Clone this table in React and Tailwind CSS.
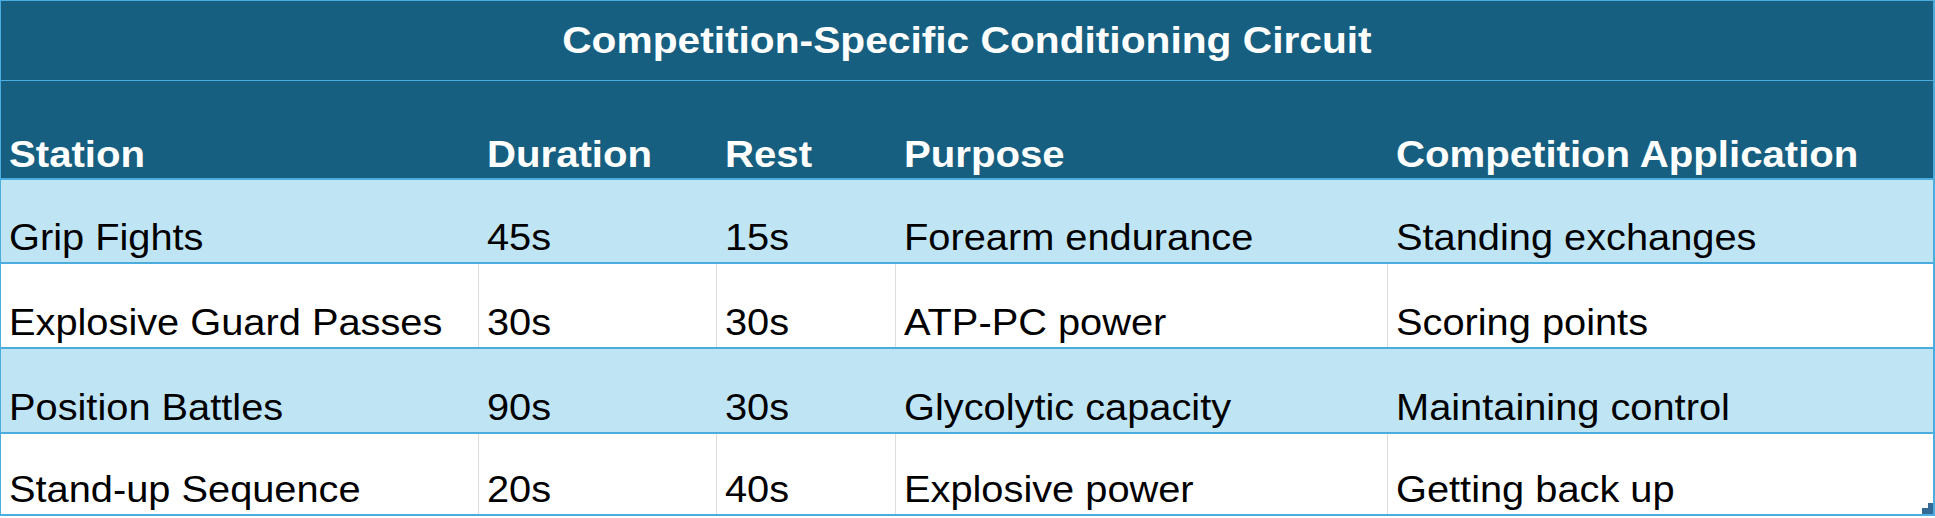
import React from "react";

const rows = [
  ["Grip Fights", "45s", "15s", "Forearm endurance", "Standing exchanges"],
  ["Explosive Guard Passes", "30s", "30s", "ATP-PC power", "Scoring points"],
  ["Position Battles", "90s", "30s", "Glycolytic capacity", "Maintaining control"],
  ["Stand-up Sequence", "20s", "40s", "Explosive power", "Getting back up"],
];

const heights = ["h-[84px]", "h-[85px]", "h-[85px]", "h-[82px]"];

export default function App() {
  return (
    <div className="w-[1935px] h-[518px] bg-white font-['Liberation_Sans',Arial,sans-serif]">
      <div className="relative w-[1935px] border-t border-l border-r-2 border-[#4badde]">
        <div className="h-[80px] bg-[#175f80] border-b border-[#4badde] flex items-center justify-center text-white font-bold text-[37px] leading-none">
          <span className="inline-block origin-center scale-x-[1.1] whitespace-nowrap">
            Competition-Specific Conditioning Circuit
          </span>
        </div>
        <div className="grid grid-cols-[478px_238px_179px_492px_1fr] h-[99px] bg-[#175f80] border-b-2 border-[#4badde]">
          {["Station", "Duration", "Rest", "Purpose", "Competition Application"].map((h) => (
            <div key={h} className="flex items-end pl-[8px] pb-[5px] text-white font-bold text-[37px] leading-none">
              <span className="inline-block origin-left scale-x-[1.085] whitespace-nowrap">{h}</span>
            </div>
          ))}
        </div>
        {rows.map((r, i) => {
          const blue = i % 2 === 0;
          return (
            <div
              key={i}
              className={`grid grid-cols-[478px_238px_179px_492px_1fr] ${heights[i]} border-b-2 border-[#4badde] ${blue ? "bg-[#bfe5f5]" : "bg-white"}`}
            >
              {r.map((c, j) => (
                <div
                  key={j}
                  className={`flex items-end pl-[8px] pb-[6px] text-black text-[37px] leading-none ${!blue && j < 4 ? "border-r border-[#dddddd]" : ""}`}
                >
                  <span className="inline-block origin-left scale-x-[1.075] whitespace-nowrap">{c}</span>
                </div>
              ))}
            </div>
          );
        })}
        <div className="absolute right-0 bottom-[2px] flex flex-col items-end">
          <div className="w-[5px] h-[5px] bg-[#336b96]" />
          <div className="w-[11px] h-[6px] bg-[#336b96]" />
        </div>
      </div>
    </div>
  );
}
